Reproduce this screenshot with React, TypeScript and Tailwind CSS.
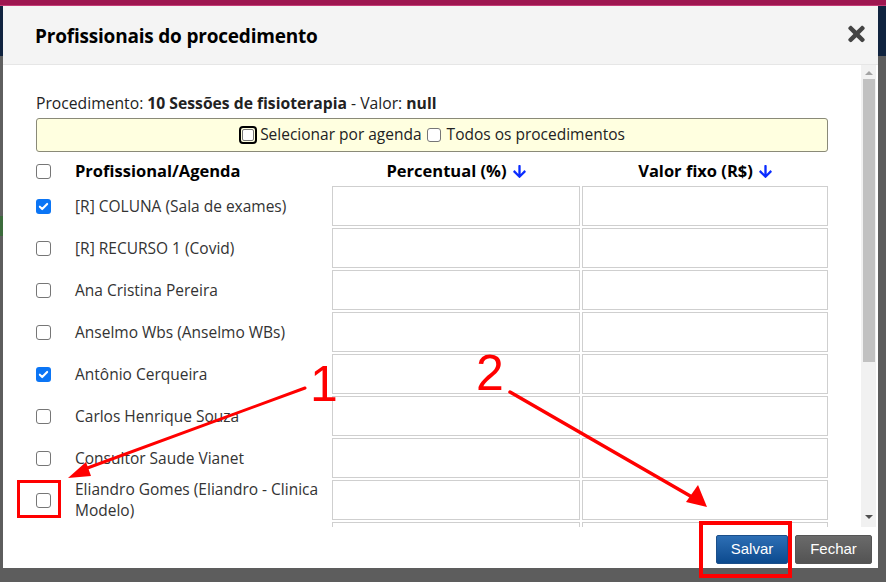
import React from "react";

type Row = { name: string; checked?: boolean };

const rows: Row[] = [
  { name: "[R] COLUNA (Sala de exames)", checked: true },
  { name: "[R] RECURSO 1 (Covid)" },
  { name: "Ana Cristina Pereira" },
  { name: "Anselmo Wbs (Anselmo WBs)" },
  { name: "Antônio Cerqueira", checked: true },
  { name: "Carlos Henrique Souza" },
  { name: "Consultor Saude Vianet" },
  { name: "Eliandro Gomes (Eliandro - Clinica Modelo)" },
  { name: "" },
];

function Check({ checked }: { checked?: boolean }) {
  if (checked) {
    return (
      <span className="flex h-[15px] w-[15px] shrink-0 items-center justify-center rounded-[3px] bg-[#0b75f5]">
        <svg viewBox="0 0 12 12" className="h-[11px] w-[11px]">
          <path d="M2 6.2l2.6 2.6L10 3.2" fill="none" stroke="#fff" strokeWidth="2.2" strokeLinecap="round" strokeLinejoin="round" />
        </svg>
      </span>
    );
  }
  return <span className="h-[15px] w-[15px] shrink-0 rounded-[3px] border border-[#767676] bg-white" />;
}

function ArrowDown() {
  return (
    <svg viewBox="0 0 448 512" className="ml-[6px] inline-block h-[15px] w-[13px] align-[-2px]">
      <path
        fill="#0a2cff"
        d="M413.1 222.5l22.2 22.2c9.4 9.4 9.4 24.6 0 33.9L241 473c-9.4 9.4-24.6 9.4-33.9 0L12.7 278.6c-9.4-9.4-9.4-24.6 0-33.9l22.2-22.2c9.5-9.5 25-9.3 34.3.4L184 343.4V56c0-13.3 10.7-24 24-24h32c13.3 0 24 10.7 24 24v287.4l114.8-120.5c9.3-9.8 24.8-10 34.3-.4z"
      />
    </svg>
  );
}

export default function App() {
  return (
    <div className="relative h-[582px] w-[886px] overflow-hidden bg-[#5d5d5d] font-['Open_Sans',sans-serif] text-[#222]">
      <div className="h-[6px] bg-[#9e1650] border-b border-[#c43a75]" />
      <div className="flex">
        {/* left strip of page behind */}
        <div className="flex w-[3px] flex-col">
          <div className="h-[50px] bg-[#10233f]" />
          <div className="h-[160px] bg-[#5f5f5f]" />
          <div className="h-[20px] bg-[#3c6b3c]" />
        </div>

        {/* modal */}
        <div className="flex h-[562px] w-[875px] flex-col bg-white">
          <div className="flex h-[59px] shrink-0 items-center justify-between border-b border-[#e6e6e6] bg-[#f4f4f4] pl-[32px] pr-[12px]">
            <h2 className="mt-[2px] text-[19px] font-bold tracking-[-0.2px] text-black">Profissionais do procedimento</h2>
            <svg viewBox="0 0 352 512" className="mb-[2px] h-[24px] w-[19px]">
              <path
                fill="#444"
                d="M242.72 256l100.07-100.07c12.28-12.28 12.28-32.19 0-44.48l-22.24-22.24c-12.28-12.28-32.19-12.28-44.48 0L176 189.28 75.93 89.21c-12.28-12.28-32.19-12.28-44.48 0L9.21 111.45c-12.28 12.28-12.28 32.19 0 44.48L109.28 256 9.21 356.07c-12.28 12.28-12.28 32.19 0 44.48l22.24 22.24c12.28 12.28 32.2 12.28 44.48 0L176 322.72l100.07 100.07c12.28 12.28 32.2 12.28 44.48 0l22.24-22.24c12.28-12.28 12.28-32.19 0-44.48L242.72 256z"
              />
            </svg>
          </div>

          <div className="flex h-[462px] shrink-0">
            <div className="w-[858px] overflow-hidden pl-[33px] pr-[33px] pt-[28px]">
              <p className="h-[20px] text-[15.7px] leading-[20px]">
                Procedimento: <b>10 Sessões de fisioterapia</b> - Valor: <b>null</b>
              </p>

              <div className="mt-[5px] flex h-[34px] items-center justify-center rounded-[3px] border border-[#8a8a78] bg-[#ffffe0] text-[15.5px]">
                <span className="flex h-[18px] w-[18px] items-center justify-center rounded-[4px] border-2 border-black">
                  <span className="h-[12px] w-[12px] rounded-[2px] border border-[#767676] bg-white" />
                </span>
                <span className="ml-[3px]">Selecionar por agenda</span>
                <span className="ml-[5px] h-[14px] w-[14px] rounded-[3px] border border-[#767676] bg-white" />
                <span className="ml-[6px]">Todos os procedimentos</span>
              </div>

              <div className="mt-[6px] grid grid-cols-[294px_248px_246px] gap-x-[2px] gap-y-[2px]">
                <div className="flex h-[26px] items-center">
                  <Check />
                  <span className="ml-[24px] text-[16.5px] font-bold text-black">Profissional/Agenda</span>
                </div>
                <div className="flex items-center justify-center text-[16.5px] font-bold text-black">
                  Percentual (%)
                  <ArrowDown />
                </div>
                <div className="flex items-center justify-center text-[16.5px] font-bold text-black">
                  Valor fixo (R$)
                  <ArrowDown />
                </div>

                {rows.map((r, i) => (
                  <React.Fragment key={i}>
                    <div className="flex h-[40px] items-center">
                      <Check checked={r.checked} />
                      <span className="ml-[24px] text-[15.5px] leading-[21px] text-[#333]">{r.name}</span>
                    </div>
                    <div className="h-[40px] border border-[#cfcfcf]" />
                    <div className="h-[40px] border border-[#cfcfcf]" />
                  </React.Fragment>
                ))}
              </div>
            </div>

            {/* scrollbar */}
            <div className="flex w-[15px] flex-col items-center bg-[#f1f1f1] pt-[6px]">
              <span className="h-0 w-0 border-x-[4px] border-b-[4px] border-x-transparent border-b-[#a3a3a3]" />
              <div className="mt-[4px] h-[283px] w-[12px] bg-[#c1c1c1]" />
              <div className="flex-1" />
              <span className="mb-[8px] h-0 w-0 border-x-[4px] border-t-[4px] border-x-transparent border-t-[#505050]" />
            </div>
            <div className="w-[2px]" />
          </div>

          <div className="flex flex-1 items-start justify-end gap-[7px] pr-[6px] pt-[8px] font-['Liberation_Sans',sans-serif] text-[15px] text-white">
            <button className="h-[29px] w-[72px] rounded-[2px] border border-[#1b4f8a] bg-gradient-to-b from-[#2d6fb5] to-[#0b4a8e]">
              Salvar
            </button>
            <button className="h-[29px] w-[77px] rounded-[2px] border border-[#555] bg-gradient-to-b from-[#6a6a6a] to-[#535353]">
              Fechar
            </button>
          </div>
        </div>

        {/* right strip of page behind */}
        <div className="flex w-[8px] flex-col">
          <div className="h-[50px] bg-[#10233f]" />
        </div>
      </div>

      {/* red annotations drawn over the screenshot */}
      <svg className="pointer-events-none absolute inset-0" width="886" height="582" viewBox="0 0 886 582">
        <g stroke="#ff0000" fill="none">
          <rect x="18.5" y="481.5" width="41" height="35" strokeWidth="3" />
          <rect x="701" y="523" width="89" height="53" strokeWidth="4" />
          <line x1="305" y1="388" x2="82" y2="470" strokeWidth="3" strokeLinecap="round" />
          <line x1="510" y1="392" x2="692" y2="497" strokeWidth="3.5" strokeLinecap="round" />
        </g>
        <polygon points="68,478 86,462 91,476" fill="#ff0000" />
        <polygon points="707,507 686,502 698,485" fill="#ff0000" />
        <text x="310" y="401" fill="#ff0000" fontSize="50" fontFamily="Liberation Sans, sans-serif">1</text>
        <text x="476" y="390" fill="#ff0000" fontSize="50" fontFamily="Liberation Sans, sans-serif">2</text>
      </svg>
    </div>
  );
}
